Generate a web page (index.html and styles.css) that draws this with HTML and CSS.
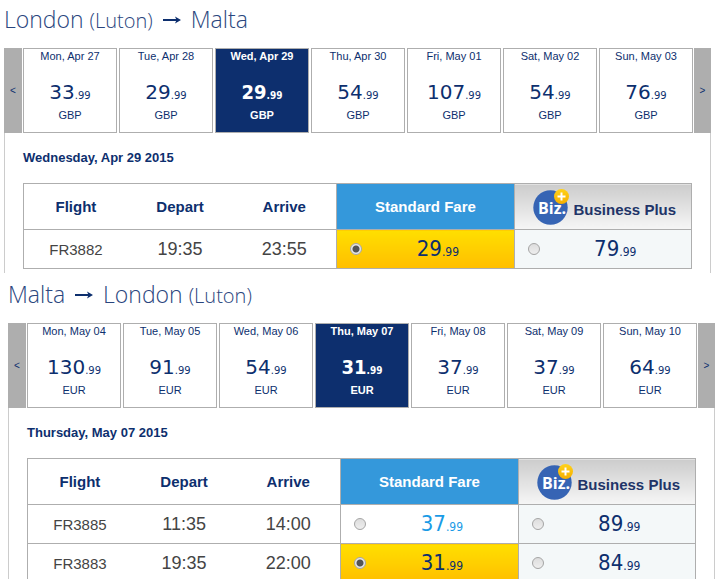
FILE: index.html
```
<!DOCTYPE html>
<html lang="en">
<head>
  <meta charset="UTF-8">
  <meta name="viewport" content="width=device-width, initial-scale=1.0"/>
  <title>Select flights</title>
  <link rel="stylesheet" href="styles.css">
</head>
<body>
  <svg class="defs" aria-hidden="true">
    <defs>
      <linearGradient id="gold" x1="0" y1="0" x2="0" y2="1">
        <stop offset="0" stop-color="#ffd21a"/>
        <stop offset="1" stop-color="#f5ae00"/>
      </linearGradient>
    </defs>
    <symbol id="arrow" viewBox="0 0 18 8">
      <path d="M0 4h14" stroke="#0d2f6e" stroke-width="2"/>
      <path d="M12 0.5L18 4L12 7.5L13.5 4z" fill="#0d2f6e"/>
    </symbol>
  </svg>

  <section class="trip outbound">
    <h2>London <small>(Luton)</small> <svg class="arrow" role="img" aria-label="to"><use href="#arrow"/></svg> Malta</h2>
    <div class="calendar">
      <button class="nav">&lt;</button>
      <div class="days">
        <button class="day"><span>Mon, Apr 27</span><span class="price">33<small>.99</small></span><span>GBP</span></button>
        <button class="day"><span>Tue, Apr 28</span><span class="price">29<small>.99</small></span><span>GBP</span></button>
        <button class="day active"><span>Wed, Apr 29</span><span class="price">29<small>.99</small></span><span>GBP</span></button>
        <button class="day"><span>Thu, Apr 30</span><span class="price">54<small>.99</small></span><span>GBP</span></button>
        <button class="day"><span>Fri, May 01</span><span class="price">107<small>.99</small></span><span>GBP</span></button>
        <button class="day"><span>Sat, May 02</span><span class="price">54<small>.99</small></span><span>GBP</span></button>
        <button class="day"><span>Sun, May 03</span><span class="price">76<small>.99</small></span><span>GBP</span></button>
      </div>
      <button class="nav">&gt;</button>
    </div>
    <div class="panel">
      <h3>Wednesday, Apr 29 2015</h3>
      <table class="flights">
        <thead>
          <tr>
            <th>Flight</th>
            <th>Depart</th>
            <th>Arrive</th>
            <th class="fare standard">Standard Fare</th>
            <th class="fare business">
              <div class="plus">
                <svg class="biz" viewBox="0 0 36 36">
                  <circle cx="17.5" cy="18.5" r="17.2" fill="#3664b4"/>
                  <text class="biz-text" x="5" y="25">Biz.</text>
                  <circle cx="28.5" cy="7.5" r="7.5" fill="url(#gold)"/>
                  <path d="M28.5 3.5v8M24.5 7.5h8" stroke="#fff" stroke-width="2"/>
                </svg>
                <span>Business Plus</span>
              </div>
            </th>
          </tr>
        </thead>
        <tbody>
          <tr>
            <td>FR3882</td>
            <td class="time">19:35</td>
            <td class="time">23:55</td>
            <td class="fare selected"><label><input type="radio" name="out" checked><span class="cost">29<small>.99</small></span></label></td>
            <td class="fare biz-fare"><label><input type="radio" name="out"><span class="cost">79<small>.99</small></span></label></td>
          </tr>
        </tbody>
      </table>
    </div>
  </section>

  <section class="trip inbound">
    <h2>Malta <svg class="arrow" role="img" aria-label="to"><use href="#arrow"/></svg> London <small>(Luton)</small></h2>
    <div class="calendar">
      <button class="nav">&lt;</button>
      <div class="days">
        <button class="day"><span>Mon, May 04</span><span class="price">130<small>.99</small></span><span>EUR</span></button>
        <button class="day"><span>Tue, May 05</span><span class="price">91<small>.99</small></span><span>EUR</span></button>
        <button class="day"><span>Wed, May 06</span><span class="price">54<small>.99</small></span><span>EUR</span></button>
        <button class="day active"><span>Thu, May 07</span><span class="price">31<small>.99</small></span><span>EUR</span></button>
        <button class="day"><span>Fri, May 08</span><span class="price">37<small>.99</small></span><span>EUR</span></button>
        <button class="day"><span>Sat, May 09</span><span class="price">37<small>.99</small></span><span>EUR</span></button>
        <button class="day"><span>Sun, May 10</span><span class="price">64<small>.99</small></span><span>EUR</span></button>
      </div>
      <button class="nav">&gt;</button>
    </div>
    <div class="panel">
      <h3>Thursday, May 07 2015</h3>
      <table class="flights">
        <thead>
          <tr>
            <th>Flight</th>
            <th>Depart</th>
            <th>Arrive</th>
            <th class="fare standard">Standard Fare</th>
            <th class="fare business">
              <div class="plus">
                <svg class="biz" viewBox="0 0 36 36">
                  <circle cx="17.5" cy="18.5" r="17.2" fill="#3664b4"/>
                  <text class="biz-text" x="5" y="25">Biz.</text>
                  <circle cx="28.5" cy="7.5" r="7.5" fill="url(#gold)"/>
                  <path d="M28.5 3.5v8M24.5 7.5h8" stroke="#fff" stroke-width="2"/>
                </svg>
                <span>Business Plus</span>
              </div>
            </th>
          </tr>
        </thead>
        <tbody>
          <tr>
            <td>FR3885</td>
            <td class="time">11:35</td>
            <td class="time">14:00</td>
            <td class="fare low"><label><input type="radio" name="in"><span class="cost">37<small>.99</small></span></label></td>
            <td class="fare biz-fare"><label><input type="radio" name="in"><span class="cost">89<small>.99</small></span></label></td>
          </tr>
          <tr>
            <td>FR3883</td>
            <td class="time">19:35</td>
            <td class="time">22:00</td>
            <td class="fare selected"><label><input type="radio" name="in" checked><span class="cost">31<small>.99</small></span></label></td>
            <td class="fare biz-fare"><label><input type="radio" name="in"><span class="cost">84<small>.99</small></span></label></td>
          </tr>
        </tbody>
      </table>
    </div>
  </section>
</body>
</html>
```
FILE: styles.css
```
* { box-sizing: border-box; }
body { font-family: "Liberation Sans", Arial, sans-serif; background: #fff; color: #0d2f6e; margin: 0; }
.defs { position: absolute; width: 0; height: 0; }
small { line-height: 1; }

.outbound { margin: 0 10px 0 4px; }
.inbound { margin: 0 6px 0 8px; padding-top: 2px; }

h2 { font-family: "Open Sans", sans-serif; font-weight: 300; font-size: 23px; line-height: 38px; margin: 0; padding-bottom: 10px; color: #2a467e; }
h2 small { font-size: 20px; }
.arrow { width: 18px; height: 8px; margin: 0 4px; vertical-align: 4px; }

.calendar { display: grid; grid-template-columns: 18px 1fr 17px; column-gap: 1px; }
.days { display: grid; grid-template-columns: repeat(7, 1fr); column-gap: 2px; }
.nav { background: #aeaeae; border: none; padding: 0; font-family: inherit; font-size: 10px; color: #0d2f6e; }
.day { display: flex; flex-direction: column; align-items: center; height: 85px; padding: 0; background: #fff; border: 1px solid #aeaeae; color: #0d2f6e; font-family: inherit; font-size: 11px; line-height: 14px; }
.price { font-family: "DejaVu Sans", Verdana, sans-serif; font-size: 20px; line-height: 24px; margin: 17px 0 4px; }
.price small { font-size: 10px; }
.active { background: #0d2f6e; color: #fff; font-weight: bold; }
.active .price { font-family: "DejaVu Sans Condensed", "DejaVu Sans", sans-serif; }

.panel { border: solid #ccc; border-width: 0 1px; padding: 0 18px 4px; }
.inbound .panel { overflow: hidden; padding-bottom: 0; }
.inbound .flights { margin-bottom: -4px; }
h3 { font-size: 13px; line-height: 50px; margin: 0; }

.flights { width: 100%; table-layout: fixed; border-collapse: collapse; border: 1px solid #aeaeae; }
.flights th, .flights td { padding: 0; border: solid #aeaeae; border-width: 1px 0; text-align: center; width: 15.6%; }
.flights th { height: 46px; font-size: 15px; }
.flights td { height: 39px; font-size: 15px; color: #444; }
.flights .time { font-size: 18px; }
.flights .fare { border-width: 1px; width: 26.5%; }
.flights .standard { background: #3498db; color: #fff; }
.flights .business { background: linear-gradient(#ccc, #f6f6f6); color: #213468; }
.flights .selected { background: linear-gradient(#ffdf00, #ffbe00); }
.flights .biz-fare { background: #f4f8f9; }
.flights .low .cost { color: #1a9be6; }

.plus { display: flex; align-items: center; justify-content: center; gap: 5px; padding-left: 3px; }
.plus span { padding-top: 6px; }
.biz { width: 36px; height: 36px; }
.biz-text { font: bold 16px "Open Sans", sans-serif; fill: #fff; }

label { display: flex; align-items: center; padding-left: 13px; }
input { appearance: none; width: 12px; height: 12px; margin: 0; border: 1px solid #a5a5a5; border-radius: 50%; background: linear-gradient(#ddd, #eee); }
input:checked { background: radial-gradient(circle, #555 0 3px, #e8e8e8 4px); }
.cost { flex: 1; font-family: "DejaVu Sans Condensed", "DejaVu Sans", sans-serif; font-size: 22px; line-height: 26px; color: #0d2f6e; }
.cost small { font-size: 12px; }
```
